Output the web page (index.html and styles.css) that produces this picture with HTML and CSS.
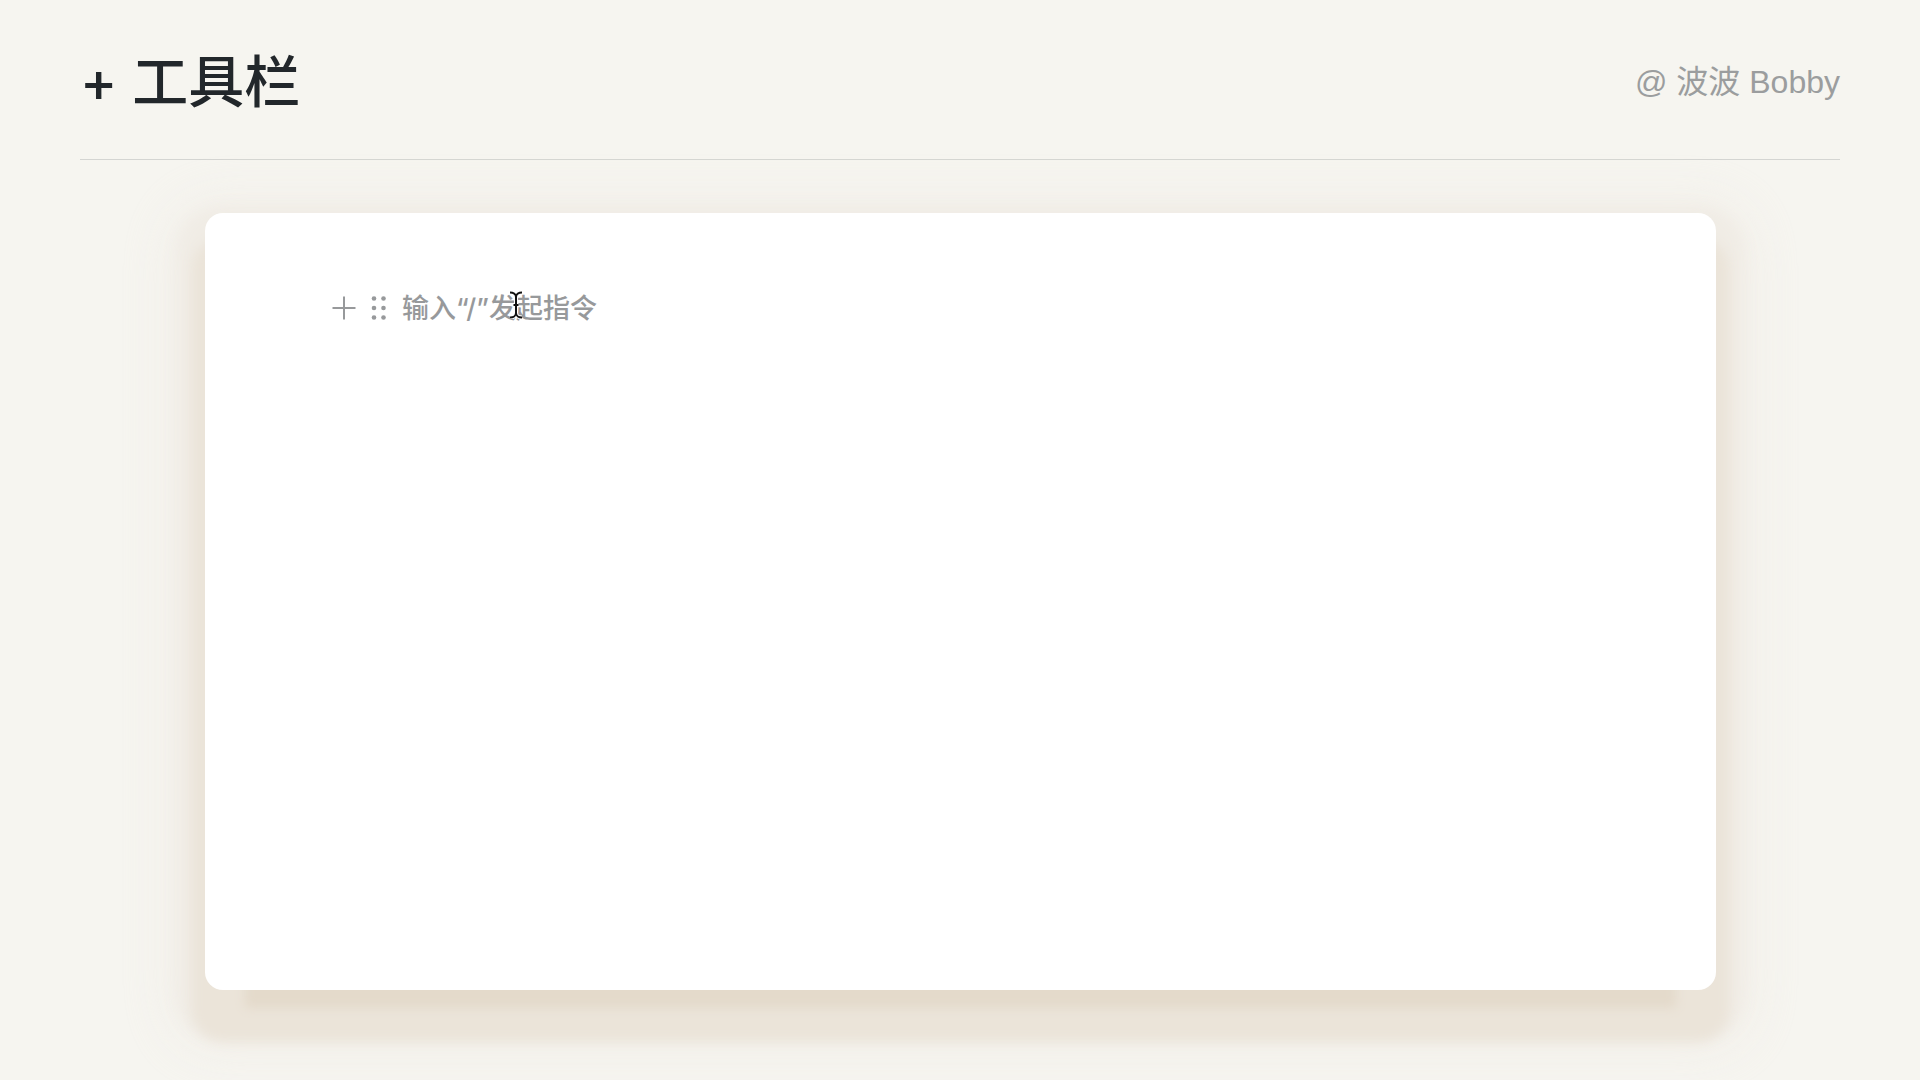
FILE: index.html
```html
<!DOCTYPE html>
<html lang="zh-CN">
<head>
    <meta charset="UTF-8">
    <meta name="viewport" content="width=device-width, initial-scale=1.0">
    <title>工具栏</title>
    <link rel="stylesheet" href="styles.css">
</head>
<body>

    <!-- Page Header -->
    <header class="header">
        <h1>+ 工具栏</h1>
        <p class="author">@ 波波 Bobby</p>
    </header>

    <!-- Editor -->
    <main class="editor">
        <div class="block">
            <button class="tool-btn" type="button" aria-label="+">
                <svg width="24" height="24" viewBox="0 0 24 24" fill="none" stroke="#97999b" stroke-width="2">
                    <path d="M12 0.5V23.5M0.5 12H23.5"/>
                </svg>
            </button>
            <button class="tool-btn drag-btn" type="button" aria-label="⠿">
                <svg width="16" height="24" viewBox="0 0 16 24" fill="#97999b">
                    <circle cx="3" cy="2.5" r="2.3"/>
                    <circle cx="12.5" cy="2.5" r="2.3"/>
                    <circle cx="3" cy="12" r="2.3"/>
                    <circle cx="12.5" cy="12" r="2.3"/>
                    <circle cx="3" cy="21.5" r="2.3"/>
                    <circle cx="12.5" cy="21.5" r="2.3"/>
                </svg>
            </button>
            <div class="field">
                <input class="block-input" type="text" placeholder="输入“/”发起指令" aria-label="输入“/”发起指令">
                <!-- Text cursor over the placeholder -->
                <svg class="cursor" width="14" height="28" viewBox="0 0 14 28" fill="none">
                    <path d="M1 1.5C4 1.5 7 3 7 6V22C7 25 4 26.5 1 26.5M13 1.5C10 1.5 7 3 7 6M7 22C7 25 10 26.5 13 26.5M4.5 14H9.5" stroke="#fff" stroke-width="4"/>
                    <path d="M1 1.5C4 1.5 7 3 7 6V22C7 25 4 26.5 1 26.5M13 1.5C10 1.5 7 3 7 6M7 22C7 25 10 26.5 13 26.5M4.5 14H9.5" stroke="#111" stroke-width="2"/>
                </svg>
            </div>
        </div>
    </main>

</body>
</html>
```
FILE: styles.css
```css
* {
    box-sizing: border-box;
}

body {
    font-family: 'Liberation Sans', 'Noto Sans CJK SC', sans-serif;
    background-color: #f6f5f0;
    color: #22272b;
    margin: 0;
    padding: 0 80px 90px;
    min-height: 100vh;
    display: flex;
    flex-direction: column;
}

/* Header */
.header {
    display: flex;
    justify-content: space-between;
    align-items: center;
    height: 160px;
    padding-top: 4px;
    border-bottom: 1px solid #d4d5d2;
}

.header h1 {
    font-family: 'Inter', 'Noto Sans CJK SC', sans-serif;
    font-size: 56px;
    font-weight: 500;
    line-height: 80px;
    margin: 0;
}

.author {
    font-size: 32px;
    line-height: 48px;
    color: #9b9d9e;
    margin: 0;
}

/* Editor Card */
.editor {
    flex: 1;
    margin: 53px 124px 0 125px;
    padding: 70px 127px;
    background-color: #ffffff;
    border-radius: 18px;
    box-shadow:
        0 58px 10px -40px #e4dacb,
        0 38px 12px 13px #ebe4d9,
        0 22px 16px 28px #f0ece5,
        0 24px 50px 36px rgba(240, 235, 228, 0.6);
}

.block {
    display: flex;
    align-items: center;
    height: 50px;
}

.tool-btn {
    display: flex;
    padding: 0;
    border: none;
    background: none;
    cursor: pointer;
}

.drag-btn {
    margin: 0 15px;
}

.field {
    position: relative;
    flex: 1;
}

.block-input {
    width: 100%;
    padding: 2px 0 0;
    border: none;
    outline: none;
    background: none;
    font-family: 'Inter', 'Noto Sans CJK SC', sans-serif;
    font-size: 27px;
    font-weight: 500;
    line-height: 40px;
}

.block-input::placeholder {
    color: #97999b;
    opacity: 1;
}

.cursor {
    position: absolute;
    left: 107px;
    top: 4px;
    pointer-events: none;
}
```
